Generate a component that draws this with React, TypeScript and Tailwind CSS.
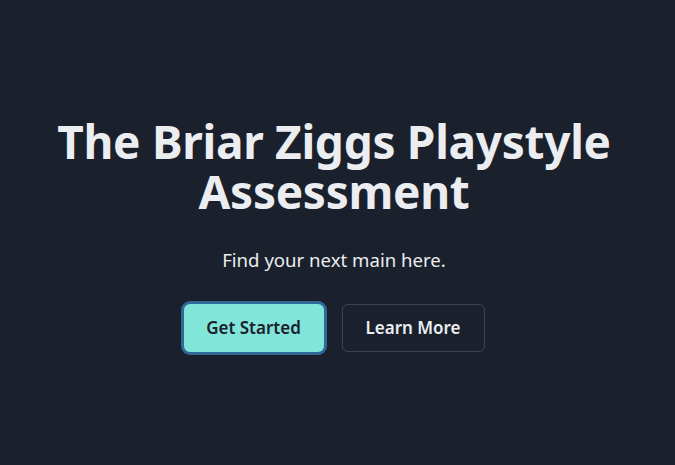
import React from "react";

export default function App() {
  return (
    <div className="h-[465px] w-full bg-[#1a202c]">
      <div
        className="flex h-[465px] w-[668px] flex-col items-center pt-[116px] text-center"
        style={{ fontFamily: '"Noto Sans", "Open Sans", sans-serif' }}
      >
        <h1 className="text-[46px] font-bold leading-[50px] tracking-[-0.3px] text-[#ebedf0]">
          The Briar Ziggs Playstyle
          <br />
          Assessment
        </h1>
        <p className="mt-[30px] text-[18.6px] leading-[28px] text-[#ebedf0]">Find your next main here.</p>
        <div className="mt-[30px] flex gap-[18px]">
          <button className="h-[48px] w-[140px] rounded-md bg-[#81e6d9] text-[17px] font-semibold text-[#1a202c] shadow-[0_0_0_3px_rgba(66,153,225,0.6)]">
            Get Started
          </button>
          <button className="h-[48px] w-[143px] rounded-md border border-[rgba(255,255,255,0.16)] text-[17px] font-semibold text-[#ebedf0]">
            Learn More
          </button>
        </div>
      </div>
    </div>
  );
}
